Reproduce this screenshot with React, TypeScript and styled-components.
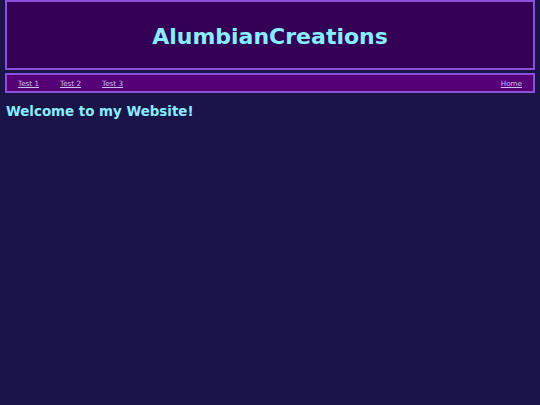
import React from 'react';
import styled, { createGlobalStyle } from 'styled-components';

const GlobalStyle = createGlobalStyle`
  html, body {
    margin: 0;
    padding: 0;
    background-color: #1b1449;
    font-family: 'DejaVu Sans', Verdana, sans-serif;
  }
`;

const Page = styled.div`
  padding: 0 5px;
`;

const Header = styled.header`
  height: 66px;
  background-color: #330055;
  border: 2px solid #8a50d8;
  display: flex;
  align-items: center;
  justify-content: center;
`;

const Title = styled.h1`
  margin: 3px 0 0 0;
  font-size: 22px;
  font-weight: 700;
  color: #88eeff;
`;

const NavBar = styled.nav`
  margin-top: 3px;
  height: 16px;
  background-color: #550077;
  border: 2px solid #8a50d8;
  display: flex;
  align-items: center;
  padding: 0 11px 0 11px;
`;

const NavLinks = styled.div`
  display: flex;
  gap: 21px;
  flex: 1;
`;

const NavLink = styled.a`
  font-size: 7.2px;
  color: #c8c0f4;
  text-decoration: underline;
  cursor: pointer;
`;

const Welcome = styled.h2`
  margin: 11px 0 0 1px;
  font-size: 13.4px;
  font-weight: 700;
  color: #88eeff;
`;

const App = () => {
  return (
    <Page>
      <GlobalStyle />
      <Header>
        <Title>AlumbianCreations</Title>
      </Header>
      <NavBar>
        <NavLinks>
          <NavLink href="#">Test 1</NavLink>
          <NavLink href="#">Test 2</NavLink>
          <NavLink href="#">Test 3</NavLink>
        </NavLinks>
        <NavLink href="#">Home</NavLink>
      </NavBar>
      <Welcome>Welcome to my Website!</Welcome>
    </Page>
  );
};

export default App;
